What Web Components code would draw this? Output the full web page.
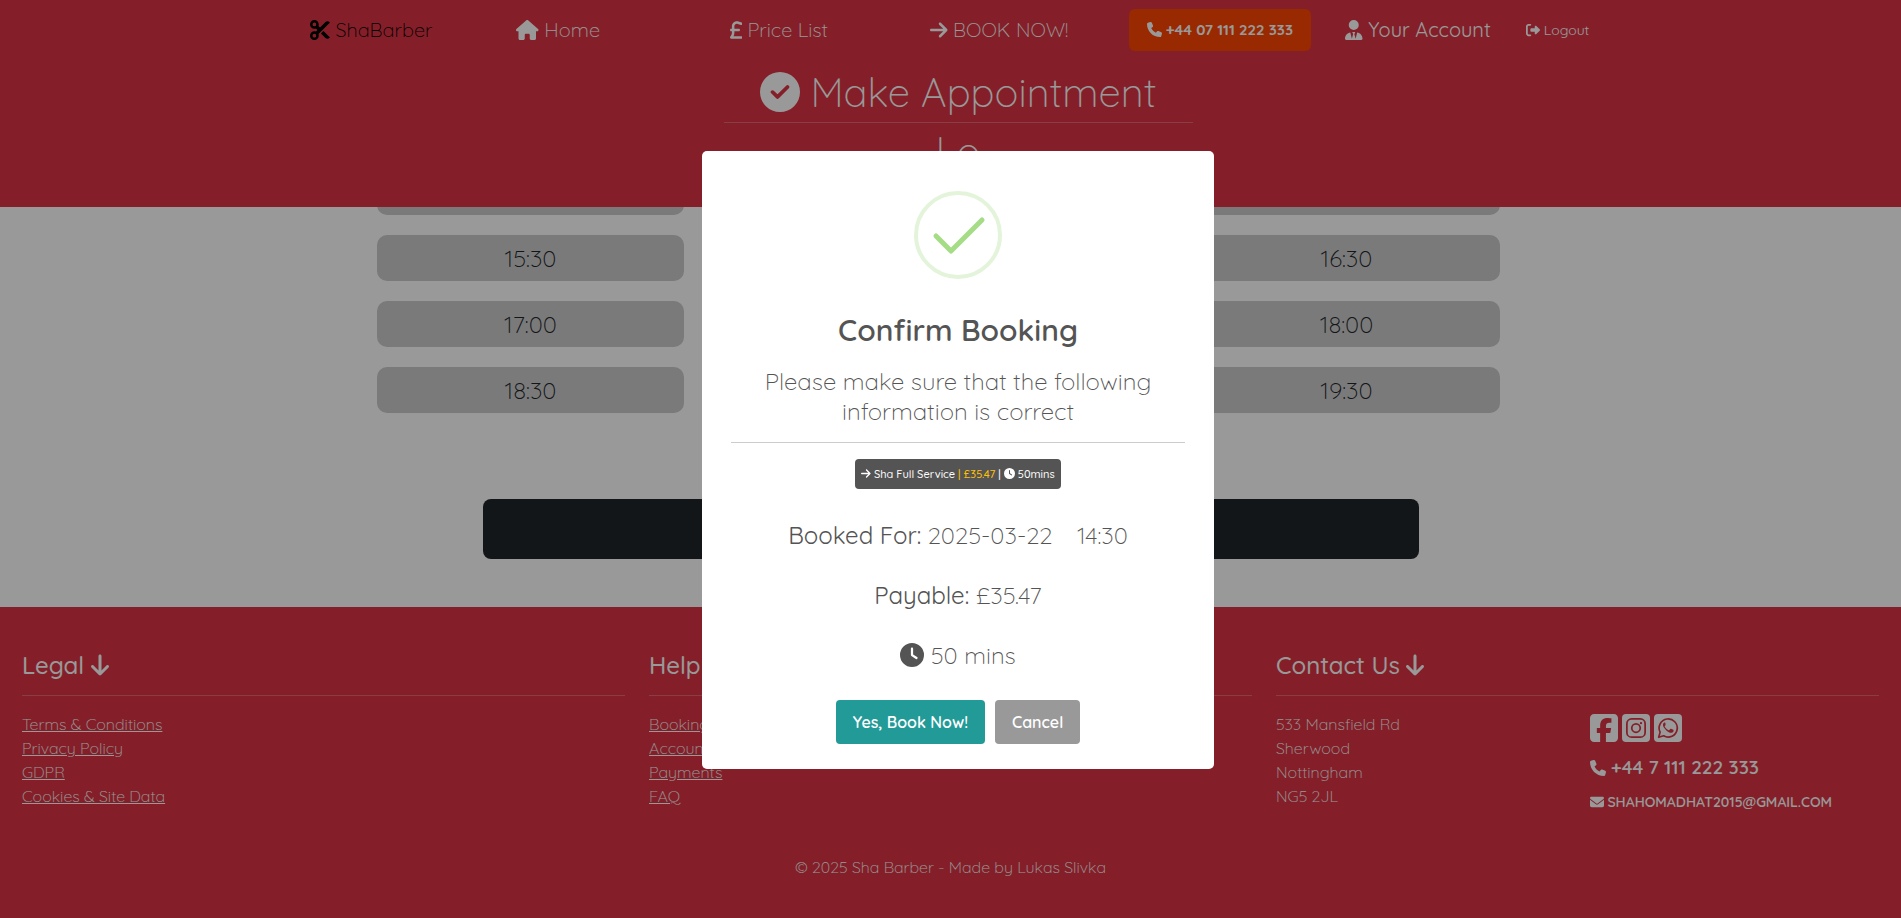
<!DOCTYPE html>
<html lang="en">
<head>
<meta charset="utf-8">
<meta name="viewport" content="width=device-width, initial-scale=1">
<title>ShaBarber - Make Appointment</title>
<style>
    body {
        margin: 0;
        min-height: 100vh;
        display: flex;
        flex-direction: column;
        overflow: hidden;
        background: #fff;
        color: #212529;
        font-family: Quicksand, "Open Sans", sans-serif;
        font-size: 16px;
        font-weight: 300;
        line-height: 24px;
        --red: #dc3545;
        --shift: 15px;
    }
    time-slots {
        flex: 1;
    }
</style>
</head>
<body>
<site-header>
    <sb-icon name="check"></sb-icon> Make Appointment
    <span slot="step">Lo</span>
</site-header>
<time-slots times="14:00 14:30 15:00 15:30 16:00 16:30 17:00 17:30 18:00 18:30 19:00 19:30"></time-slots>
<site-footer></site-footer>
<confirm-modal heading="Confirm Booking">
    Please make sure that the following information is correct
</confirm-modal>

<script>
const icons = {
    scissors: [512, '<path d="M256 192l-39.5-39.5c4.9-12.6 7.5-26.2 7.5-40.5C224 50.1 173.9 0 112 0S0 50.1 0 112s50.1 112 112 112c14.3 0 27.9-2.7 40.5-7.5L192 256l-39.5 39.5c-12.6-4.9-26.2-7.5-40.5-7.5C50.1 288 0 338.1 0 400s50.1 112 112 112s112-50.1 112-112c0-14.3-2.7-27.9-7.5-40.5L499.2 76.8c7.1-7.1 7.1-18.5 0-25.6c-28.3-28.3-74.1-28.3-102.4 0L256 192zm22.6 150.6L396.8 460.8c28.3 28.3 74.1 28.3 102.4 0c7.1-7.1 7.1-18.5 0-25.6L342.6 278.6l-64 64zM64 112a48 48 0 1 1 96 0 48 48 0 1 1 -96 0zm48 240a48 48 0 1 1 0 96 48 48 0 1 1 0-96z"/>'],
    house: [576, '<path d="M575.8 255.5c0 18-15 32.1-32 32.1h-32l.7 160.2c0 2.7-.2 5.4-.5 8.1V472c0 22.1-17.9 40-40 40H456c-1.1 0-2.2 0-3.3-.1c-1.4 .1-2.8 .1-4.2 .1H416 392c-22.1 0-40-17.9-40-40V448 384c0-17.7-14.3-32-32-32H256c-17.7 0-32 14.3-32 32v64 24c0 22.1-17.9 40-40 40H160 128.1c-1.5 0-3-.1-4.5-.2c-1.2 .1-2.4 .2-3.6 .2H104c-22.1 0-40-17.9-40-40V360c0-.9 0-1.9 .1-2.8V287.6H32c-18 0-32-14-32-32.1c0-9 3-17 10-24L266.4 8c7-7 15-8 22-8s15 2 21 7L564.8 231.5c8 7 12 15 11 24z"/>'],
    sterling: [320, '<path d="M112 160.4c0-35.5 28.8-64.4 64.4-64.4c6.9 0 13.8 1.1 20.4 3.3l81.2 27.1c16.8 5.6 34.9-3.5 40.5-20.2s-3.5-34.9-20.2-40.5L217 38.6c-13.1-4.4-26.8-6.6-40.6-6.6C105.5 32 48 89.5 48 160.4V224H32c-17.7 0-32 14.3-32 32s14.3 32 32 32H48v44.5c0 17.4-4.7 34.5-13.7 49.4L4.6 431.5c-5.9 9.9-6.1 22.2-.4 32.2S20.5 480 32 480H288c17.7 0 32-14.3 32-32s-14.3-32-32-32H88.5l.7-1.1c14.9-24.9 22.8-53.3 22.8-82.4V288H224c17.7 0 32-14.3 32-32s-14.3-32-32-32H112V160.4z"/>'],
    right: [448, '<path d="M438.6 278.6c12.5-12.5 12.5-32.8 0-45.3l-160-160c-12.5-12.5-32.8-12.5-45.3 0s-12.5 32.8 0 45.3L338.8 224 32 224c-17.7 0-32 14.3-32 32s14.3 32 32 32l306.7 0L233.4 393.4c-12.5 12.5-12.5 32.8 0 45.3s32.8 12.5 45.3 0l160-160z"/>'],
    down: [384, '<path d="M169.4 470.6c12.5 12.5 32.8 12.5 45.3 0l160-160c12.5-12.5 12.5-32.8 0-45.3s-32.8-12.5-45.3 0L224 370.8 224 64c0-17.7-14.3-32-32-32s-32 14.3-32 32l0 306.7L54.6 265.4c-12.5-12.5-32.8-12.5-45.3 0s-12.5 32.8 0 45.3l160 160z"/>'],
    phone: [512, '<path d="M164.9 24.6c-7.7-18.6-28-28.5-47.4-23.2l-88 24C12.1 30.2 0 46 0 64C0 311.4 200.6 512 448 512c18 0 33.8-12.1 38.6-29.5l24-88c5.3-19.4-4.6-39.7-23.2-47.4l-96-40c-16.3-6.8-35.2-2.1-46.3 11.6L304.7 368C234.3 334.7 177.3 277.7 144 207.3L193.3 167c13.7-11.2 18.4-30 11.6-46.3l-40-96z"/>'],
    user: [448, '<path d="M224 256A128 128 0 1 0 224 0a128 128 0 1 0 0 256zM209.1 359.2l-18.6-31c-6.4-10.7 1.3-24.2 13.7-24.2H224h19.7c12.4 0 20.1 13.6 13.7 24.2l-18.6 31 33.4 123.9 39.5-161.2c77.2 12 136.3 78.8 136.3 159.4 0 17-13.8 30.7-30.7 30.7H30.7C13.8 512 0 498.2 0 481.3 0 400.7 59.1 333.9 136.2 321.9l39.5 161.2 33.4-123.9z"/>'],
    logout: [512, '<path d="M377.9 105.9L500.7 228.7c7.2 7.2 11.3 17.1 11.3 27.3s-4.1 20.1-11.3 27.3L377.9 406.1c-6.4 6.4-15 9.9-24 9.9c-18.7 0-33.9-15.2-33.9-33.9l0-62.1-128 0c-17.7 0-32-14.3-32-32l0-64c0-17.7 14.3-32 32-32l128 0 0-62.1c0-18.7 15.2-33.9 33.9-33.9c9 0 17.6 3.6 24 9.9zM160 96L96 96c-17.7 0-32 14.3-32 32l0 256c0 17.7 14.3 32 32 32l64 0c17.7 0 32 14.3 32 32s-14.3 32-32 32l-64 0c-53 0-96-43-96-96L0 128C0 75 43 32 96 32l64 0c17.7 0 32 14.3 32 32s-14.3 32-32 32z"/>'],
    check: [512, '<path d="M256 512A256 256 0 1 0 256 0a256 256 0 1 0 0 512zM369 209L241 337c-9.4 9.4-24.6 9.4-33.9 0l-64-64c-9.4-9.4-9.4-24.6 0-33.9s24.6-9.4 33.9 0l47 47L335 175c9.4-9.4 24.6-9.4 33.9 0s9.4 24.6 0 33.9z"/>'],
    clock: [512, '<path fill-rule="evenodd" d="M256 0a256 256 0 1 1 0 512A256 256 0 1 1 256 0zM232 120V256c0 8 4 15.5 10.7 20l96 64c11 7.4 25.9 4.4 33.3-6.7s4.4-25.9-6.7-33.3L280 243.2V120c0-13.3-10.7-24-24-24s-24 10.7-24 24z"/>'],
    envelope: [512, '<path d="M48 64C21.5 64 0 85.5 0 112c0 15.1 7.1 29.3 19.2 38.4L236.8 313.6c11.4 8.5 27 8.5 38.4 0L492.8 150.4c12.1-9.1 19.2-23.3 19.2-38.4c0-26.5-21.5-48-48-48H48zM0 176V384c0 35.3 28.7 64 64 64H448c35.3 0 64-28.7 64-64V176L294.4 339.2c-22.8 17.1-54 17.1-76.8 0L0 176z"/>'],
    facebook: [448, '<path d="M64 32C28.7 32 0 60.7 0 96V416c0 35.3 28.7 64 64 64h98.2V334.2H109.4V256h52.8V222.3c0-87.1 39.4-127.5 125-127.5c16.2 0 44.2 3.2 55.7 6.4V172c-6-.6-16.5-1-29.6-1c-42 0-58.2 15.9-58.2 57.2V256h83.6l-14.4 78.2H255V480H384c35.3 0 64-28.7 64-64V96c0-35.3-28.7-64-64-64H64z"/>'],
    instagram: [448, '<rect y="32" width="448" height="448" rx="64"/><g fill="none" stroke="var(--red)" stroke-width="28"><rect x="78" y="110" width="292" height="292" rx="76"/><circle cx="224" cy="256" r="68"/></g><circle cx="304" cy="177" r="19" fill="var(--red)"/>'],
    whatsapp: [448, '<rect y="32" width="448" height="448" rx="64"/><path d="M75 405l23-83a145 145 0 1 1 56 59z" fill="none" stroke="var(--red)" stroke-width="27" stroke-linejoin="round"/><path fill="var(--red)" d="M182 176c-6-10-15-8-22-3-19 16-22 42-7 68 26 43 59 74 101 89 23 8 48-1 57-19 5-12 5-22-1-26l-37-18c-6-2-9-1-13 4l-14 17c-3 4-8 4-13 2-27-12-46-29-62-57-2-5-1-8 2-11l10-12c3-4 3-7 1-11z"/>']
};

class SbIcon extends HTMLElement {
    constructor() {
        super();
        this.shadowDOM = this.attachShadow({mode: "open"});
    }

    connectedCallback() {
        this.render();
    }

    render() {
        const [width, shape] = icons[this.getAttribute("name")];
        this.shadowDOM.innerHTML = `
        <style>
            :host {
                display: inline-block;
                line-height: 0;
                vertical-align: -0.125em;
            }
            svg {
                height: 1em;
                fill: currentColor;
            }
        </style>
        <svg viewBox="0 0 ${width} 512" aria-hidden="true">${shape}</svg>`;
    }
}

class SiteHeader extends HTMLElement {
    constructor() {
        super();
        this.shadowDOM = this.attachShadow({mode: "open"});
    }

    connectedCallback() {
        this.render();
    }

    render() {
        this.shadowDOM.innerHTML = `
        <style>
            :host {
                display: block;
                padding: 0 0 28px var(--shift);
                background: var(--red);
                color: #fff;
                text-align: center;
            }
            nav {
                display: grid;
                grid-template-columns: 138px repeat(4, 1fr) 176px 100px;
                align-items: center;
                max-width: 1296px;
                height: 60px;
                margin: 0 auto;
                font-size: 20px;
                white-space: nowrap;
            }
            a {
                color: inherit;
                text-decoration: none;
            }
            .brand {
                color: #000;
                text-align: left;
            }
            .call {
                justify-self: center;
                padding: 9px 18px;
                border-radius: 6px;
                background: #ff4500;
                font-size: 15px;
                font-weight: 700;
            }
            .account {
                font-weight: 400;
            }
            .logout {
                padding-left: 20px;
                font-size: 14px;
                font-weight: 400;
                text-align: left;
            }
            h1 {
                max-width: 469px;
                margin: 8px auto 0;
                padding-bottom: 6px;
                border-bottom: 1px solid rgba(255, 255, 255, 0.25);
                font-size: 40px;
                font-weight: 300;
                line-height: 48px;
            }
            .step {
                font-size: 40px;
                line-height: 56px;
            }
        </style>
        <nav>
            <a class="brand" href="#"><sb-icon name="scissors"></sb-icon> ShaBarber</a>
            <a href="#home"><sb-icon name="house"></sb-icon> Home</a>
            <a href="#prices"><sb-icon name="sterling"></sb-icon> Price List</a>
            <a href="#book"><sb-icon name="right"></sb-icon> BOOK NOW!</a>
            <a class="call" href="tel:+4407111222333"><sb-icon name="phone"></sb-icon> +44 07 111 222 333</a>
            <a class="account" href="#account"><sb-icon name="user"></sb-icon> Your Account</a>
            <a class="logout" href="#logout"><sb-icon name="logout"></sb-icon> Logout</a>
        </nav>
        <h1><slot></slot></h1>
        <div class="step"><slot name="step"></slot></div>`;
    }
}

class TimeSlots extends HTMLElement {
    constructor() {
        super();
        this.shadowDOM = this.attachShadow({mode: "open"});
    }

    connectedCallback() {
        this.render();
    }

    render() {
        const buttons = this.getAttribute("times").split(" ")
            .map(time => `<button type="button">${time}</button>`).join("");
        // the first row slides under the header, only its lower edge shows
        this.shadowDOM.innerHTML = `
        <style>
            :host {
                display: flex;
                flex-direction: column;
                align-items: center;
                padding-bottom: 48px;
                overflow: hidden;
            }
            .slots {
                display: grid;
                grid-template-columns: repeat(3, 1fr);
                gap: 20px 101px;
                width: 1123px;
                max-width: 90%;
                margin: -38px 24px 86px 0;
            }
            button {
                height: 46px;
                padding: 0;
                border: 0;
                border-radius: 10px;
                background: #cbcbcb;
                color: #212529;
                font: inherit;
                font-size: 24px;
            }
            .next {
                width: 936px;
                max-width: 90%;
                height: 60px;
                flex: none;
                border-radius: 8px;
                background: #212529;
            }
        </style>
        <div class="slots">${buttons}</div>
        <button class="next" type="button" aria-label="Continue"></button>`;
    }
}

class SiteFooter extends HTMLElement {
    constructor() {
        super();
        this.shadowDOM = this.attachShadow({mode: "open"});
    }

    connectedCallback() {
        this.render();
    }

    render() {
        this.shadowDOM.innerHTML = `
        <style>
            :host {
                display: block;
                padding: 43px 22px 39px;
                background: var(--red);
                color: #fff;
            }
            .columns {
                display: grid;
                grid-template-columns: repeat(3, 1fr);
                gap: 24px;
            }
            h2 {
                margin: 0 0 16px;
                padding-bottom: 15px;
                border-bottom: 1px solid rgba(255, 255, 255, 0.25);
                font-size: 24px;
                font-weight: 500;
                line-height: 30px;
            }
            ul {
                margin: 0;
                padding: 0;
                list-style: none;
            }
            a {
                color: inherit;
            }
            address {
                display: grid;
                grid-template-columns: 1fr 1fr;
                gap: 24px;
                height: 96px;
                font-style: normal;
            }
            .reach a {
                text-decoration: none;
            }
            .social {
                display: flex;
                gap: 4px;
                font-size: 32px;
                line-height: 0;
            }
            .phone, .mail {
                margin-top: 11px;
                font-size: 19px;
                font-weight: 600;
            }
            .phone sb-icon {
                font-size: 16px;
            }
            .mail {
                font-size: 14px;
            }
            .copy {
                margin: 47px 0 0;
                text-align: center;
            }
        </style>
        <div class="columns">
            <section>
                <h2>Legal <sb-icon name="down"></sb-icon></h2>
                <ul>
                    <li><a href="#terms">Terms &amp; Conditions</a></li>
                    <li><a href="#privacy">Privacy Policy</a></li>
                    <li><a href="#gdpr">GDPR</a></li>
                    <li><a href="#cookies">Cookies &amp; Site Data</a></li>
                </ul>
            </section>
            <section>
                <h2>Help <sb-icon name="down"></sb-icon></h2>
                <ul>
                    <li><a href="#booking">Booking</a></li>
                    <li><a href="#account">Account</a></li>
                    <li><a href="#payments">Payments</a></li>
                    <li><a href="#faq">FAQ</a></li>
                </ul>
            </section>
            <section>
                <h2>Contact Us <sb-icon name="down"></sb-icon></h2>
                <address>
                    <div>533 Mansfield Rd<br>Sherwood<br>Nottingham<br>NG5 2JL</div>
                    <div class="reach">
                        <div class="social">
                            <a href="#facebook" aria-label="Facebook"><sb-icon name="facebook"></sb-icon></a>
                            <a href="#instagram" aria-label="Instagram"><sb-icon name="instagram"></sb-icon></a>
                            <a href="#whatsapp" aria-label="WhatsApp"><sb-icon name="whatsapp"></sb-icon></a>
                        </div>
                        <div class="phone"><a href="tel:+447111222333"><sb-icon name="phone"></sb-icon> +44 7 111 222 333</a></div>
                        <div class="mail"><a href="mailto:shahomadhat2015@gmail.com"><sb-icon name="envelope"></sb-icon> SHAHOMADHAT2015@GMAIL.COM</a></div>
                    </div>
                </address>
            </section>
        </div>
        <p class="copy">© 2025 Sha Barber - Made by Lukas Slivka</p>`;
    }
}

class ConfirmModal extends HTMLElement {
    constructor() {
        super();
        this.shadowDOM = this.attachShadow({mode: "open"});
    }

    connectedCallback() {
        this.render();
    }

    render() {
        this.shadowDOM.innerHTML = `
        <style>
            :host {
                position: fixed;
                inset: 0;
                display: flex;
                align-items: center;
                justify-content: center;
                padding: 2px 0 0 var(--shift);
                background: rgba(0, 0, 0, 0.4);
            }
            .modal {
                box-sizing: border-box;
                width: 512px;
                padding: 40px 29px 25px;
                border-radius: 5px;
                background: #fff;
                color: #545454;
                font-size: 24px;
                line-height: 30px;
                text-align: center;
            }
            .done {
                display: block;
                margin: 0 auto;
            }
            h2 {
                margin: 33px 0 18px;
                font-size: 30px;
                font-weight: 600;
                line-height: 36px;
            }
            p {
                margin: 0 0 30px;
            }
            .info {
                margin: 0;
                padding: 0 24px 16px;
                border-bottom: 1px solid #ccc;
            }
            b {
                font-weight: 400;
            }
            .time {
                margin-left: 18px;
            }
            .badge {
                display: inline-block;
                margin: 16px 0 31px;
                padding: 0 6px;
                border-radius: 4px;
                background: #545454;
                color: #fff;
                font-size: 11px;
                font-weight: 500;
                vertical-align: top;
            }
            .price {
                color: #ffc107;
            }
            .actions {
                display: flex;
                justify-content: center;
                gap: 10px;
            }
            button {
                height: 44px;
                padding: 0 17px;
                border: 0;
                border-radius: 4px;
                background: #999;
                color: #fff;
                font: inherit;
                font-size: 16px;
                font-weight: 600;
            }
            .yes {
                background: #229a98;
            }
        </style>
        <div class="modal" role="dialog" aria-modal="true" aria-labelledby="title">
            <svg class="done" width="88" height="88" viewBox="0 0 88 88" fill="none" aria-hidden="true">
                <circle cx="44" cy="44" r="42" stroke="#e4f4db" stroke-width="4"/>
                <path d="M22 45l15 15 31-31" stroke="#a5dc86" stroke-width="5" stroke-linecap="round" stroke-linejoin="round"/>
            </svg>
            <h2 id="title">${this.getAttribute("heading")}</h2>
            <p class="info"><slot></slot></p>
            <div class="badge"><sb-icon name="right"></sb-icon> Sha Full Service <span class="price">| £35.47</span> | <sb-icon name="clock"></sb-icon> 50mins</div>
            <p><b>Booked For:</b> 2025-03-22 <span class="time">14:30</span></p>
            <p><b>Payable:</b> £35.47</p>
            <p><sb-icon name="clock"></sb-icon> 50 mins</p>
            <div class="actions">
                <button class="yes" type="button">Yes, Book Now!</button>
                <button type="button">Cancel</button>
            </div>
        </div>`;
    }
}

customElements.define("sb-icon", SbIcon);
customElements.define("site-header", SiteHeader);
customElements.define("time-slots", TimeSlots);
customElements.define("site-footer", SiteFooter);
customElements.define("confirm-modal", ConfirmModal);
</script>
</body>
</html>
